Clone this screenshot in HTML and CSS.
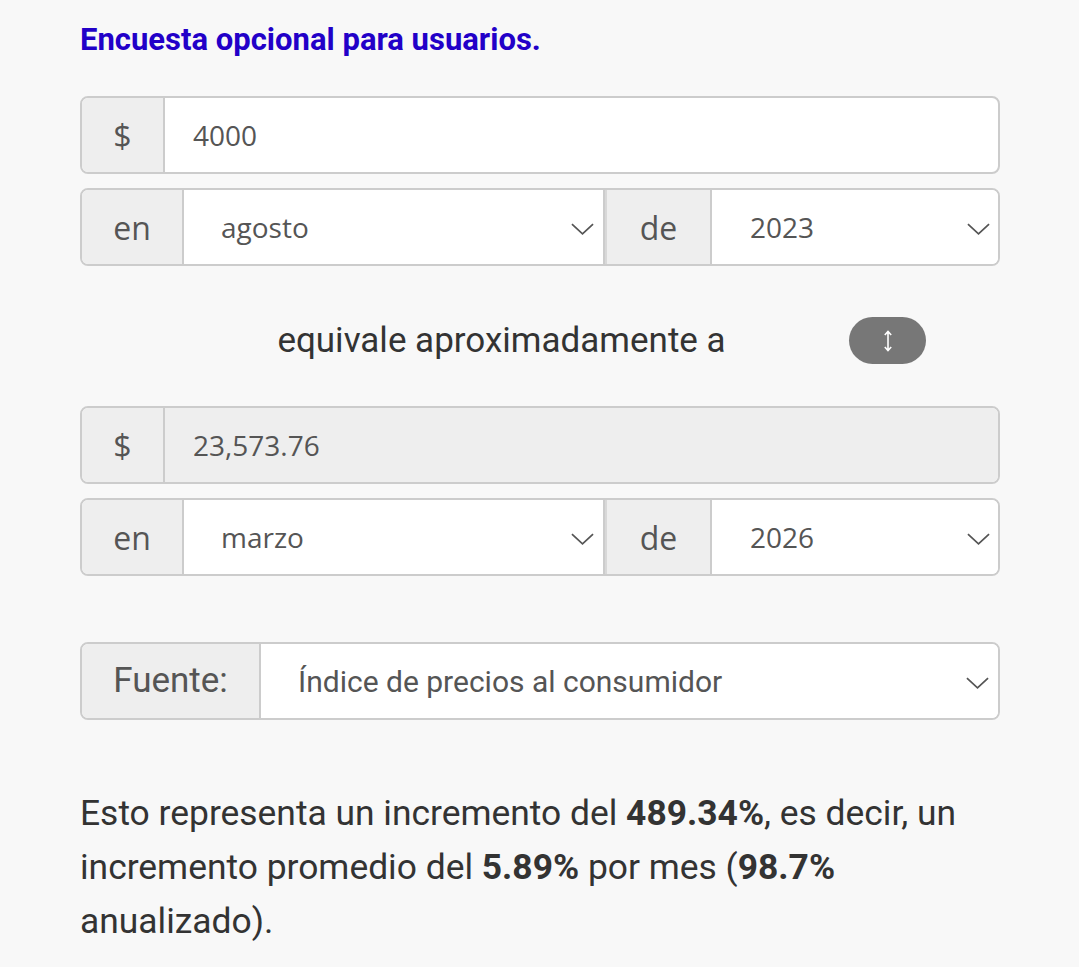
FILE: index.html
```html
<!DOCTYPE html>
<html lang="es">
<head>
<meta charset="utf-8">
<title>Calculadora de inflación</title>
<link rel="stylesheet" href="styles.css">
</head>
<body>
<div class="page">
  <p class="survey">Encuesta opcional para usuarios.</p>

  <div class="group">
    <span class="addon addon-sym">$</span>
    <div class="field">4000</div>
  </div>

  <div class="group gap-top">
    <span class="addon addon-en">en</span>
    <div class="select sel-month"><span>agosto</span><svg class="chev" viewBox="0 0 24 12"><path d="M1 1 L12 11 L23 1"/></svg></div>
    <span class="addon addon-de">de</span>
    <div class="select sel-year"><span>2023</span><svg class="chev" viewBox="0 0 24 12"><path d="M1 1 L12 11 L23 1"/></svg></div>
  </div>

  <div class="equiv">
    <span class="equiv-text">equivale aproximadamente a</span>
    <button class="swap" type="button"><svg viewBox="0 0 10 22"><path d="M5 1.5 V20.5 M1.8 5 L5 1.5 L8.2 5 M1.8 17 L5 20.5 L8.2 17"/></svg></button>
  </div>

  <div class="group">
    <span class="addon addon-sym">$</span>
    <div class="field readonly">23,573.76</div>
  </div>

  <div class="group gap-top">
    <span class="addon addon-en">en</span>
    <div class="select sel-month"><span>marzo</span><svg class="chev" viewBox="0 0 24 12"><path d="M1 1 L12 11 L23 1"/></svg></div>
    <span class="addon addon-de">de</span>
    <div class="select sel-year"><span>2026</span><svg class="chev" viewBox="0 0 24 12"><path d="M1 1 L12 11 L23 1"/></svg></div>
  </div>

  <div class="group source">
    <span class="addon addon-src">Fuente:</span>
    <div class="select sel-src"><span>Índice de precios al consumidor</span><svg class="chev" viewBox="0 0 24 12"><path d="M1 1 L12 11 L23 1"/></svg></div>
  </div>

  <p class="result">Esto representa un incremento del <b>489.34%</b>, es decir, un incremento promedio del <b>5.89%</b> por mes (<b>98.7%</b> anualizado).</p>
</div>
</body>
</html>
```

FILE: styles.css
```css
html, body {
  margin: 0;
  padding: 0;
  background: #f8f8f8;
}

.page {
  width: 920px;
  padding: 20px 0 0 80px;
}

.survey {
  margin: 0 0 36px 0;
  font-family: Roboto, "Noto Sans", sans-serif;
  font-weight: 700;
  font-size: 31px;
  line-height: 40px;
  color: #2200c8;
}

.group {
  display: flex;
  height: 74px;
  border: 2px solid #cccccc;
  border-radius: 8px;
  overflow: hidden;
  background: #ffffff;
}

.gap-top {
  margin-top: 14px;
}

.addon {
  display: flex;
  align-items: center;
  justify-content: center;
  background: #eeeeee;
  color: #555555;
  font-family: "Open Sans", "Noto Sans", sans-serif;
  font-size: 32px;
  box-sizing: border-box;
}

.addon-sym {
  width: 83px;
  border-right: 2px solid #cccccc;
}

.addon-en {
  width: 102px;
  border-right: 2px solid #cccccc;
}

.addon-de {
  width: 107px;
  border-left: 2px solid #d8d8d8;
  border-right: 2px solid #cccccc;
}

.addon-src {
  width: 179px;
  border-right: 2px solid #cccccc;
  font-family: Roboto, sans-serif;
  font-size: 35px;
  padding-bottom: 2px;
}

.field {
  flex: 1;
  display: flex;
  align-items: center;
  padding-left: 28px;
  color: #555555;
  font-family: "Open Sans", "Noto Sans", sans-serif;
  font-size: 28px;
}

.field.readonly {
  background: #eeeeee;
}

.select {
  display: flex;
  align-items: center;
  justify-content: space-between;
  box-sizing: border-box;
  padding: 0 9px 0 37px;
  color: #555555;
  font-family: "Open Sans", "Noto Sans", sans-serif;
  font-size: 28px;
  background: #ffffff;
}

.sel-month {
  width: 421px;
  border-right: 2px solid #cccccc;
}

.sel-year {
  flex: 1;
  padding-left: 38px;
  padding-right: 8px;
}

.sel-src {
  flex: 1;
  font-family: Roboto, sans-serif;
  font-size: 30px;
  padding-left: 37px;
}

.chev {
  width: 23px;
  height: 12px;
  margin-top: 4px;
  fill: none;
  stroke: #555555;
  stroke-width: 1.8;
}

.equiv {
  display: flex;
  align-items: center;
  margin: 51px 0 42px 0;
  height: 47px;
}

.equiv-text {
  flex: 1;
  text-align: center;
  padding-left: 82px;
  font-family: Roboto, sans-serif;
  font-size: 35px;
  color: #333333;
}

.swap {
  width: 77px;
  height: 47px;
  margin: 0 74px 0 8px;
  border: none;
  border-radius: 24px;
  background: #777777;
  display: flex;
  align-items: center;
  justify-content: center;
  padding: 0;
}

.swap svg {
  width: 10px;
  height: 22px;
  fill: none;
  stroke: #ffffff;
  stroke-width: 1.6;
}

.source {
  margin-top: 66px;
}

.result {
  margin: 66px 0 0 0;
  font-family: Roboto, sans-serif;
  font-size: 35.4px;
  line-height: 54px;
  color: #333333;
}

.result b {
  font-weight: 700;
}
```
